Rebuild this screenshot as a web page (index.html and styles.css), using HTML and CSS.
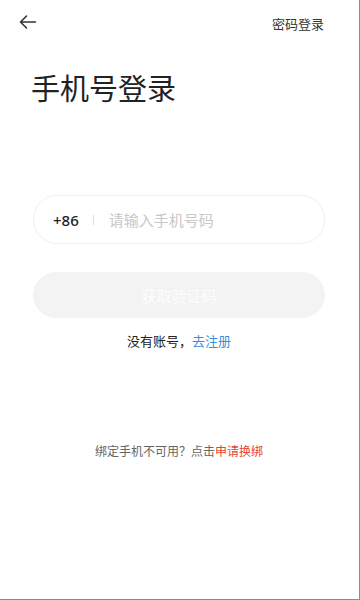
FILE: index.html
```html
<!DOCTYPE html>
<html lang="zh-CN">
<head>
<meta charset="utf-8">
<title>手机号登录</title>
<link rel="stylesheet" href="styles.css">
</head>
<body>
<div class="page">
  <header class="topbar">
    <span class="back" aria-label="返回">
      <svg width="18" height="16" viewBox="0 0 18 16"><path d="M7.5 2 L1.5 8 L7.5 14 M1.5 8 H16.5" fill="none" stroke="#333" stroke-width="1.6" stroke-linecap="round" stroke-linejoin="round"/></svg>
    </span>
    <span class="pwd-login">密码登录</span>
  </header>
  <h1 class="title">手机号登录</h1>
  <div class="phone-field">
    <span class="code">+86</span>
    <span class="sep"></span>
    <span class="placeholder">请输入手机号码</span>
  </div>
  <div class="btn">获取验证码</div>
  <p class="register">没有账号，<span class="link">去注册</span></p>
  <p class="rebind">绑定手机不可用？点击<span class="red">申请换绑</span></p>
</div>
</body>
</html>
```
FILE: styles.css
```css
* { box-sizing: border-box; }
html, body { margin: 0; padding: 0; background: #fff; }
body {
  font-family: "Noto Sans CJK SC", "Noto Sans", sans-serif;
  color: #222;
}
.page {
  width: 360px;
  height: 600px;
  border-right: 1px solid #8c8c8c;
  border-bottom: 1px solid #8c8c8c;
  padding: 0 34px 0 33px;
  overflow: hidden;
}
.topbar {
  height: 44px;
  display: flex;
  align-items: center;
  justify-content: space-between;
  margin: 0 1px 0 -14px;
}
.back { display: flex; align-items: center; height: 16px; }
.pwd-login {
  font-size: 13px;
  color: #333;
  line-height: 18px;
  margin-top: 4px;
}
.title {
  margin: 23px 0 0 -2px;
  font-size: 29px;
  font-weight: 400;
  line-height: 40px;
  color: #222;
}
.phone-field {
  margin-top: 88px;
  height: 49px;
  border: 1px solid #f0f0f0;
  border-radius: 25px;
  box-shadow: 0 0 2px rgba(0,0,0,0.03);
  display: flex;
  align-items: center;
  padding-left: 19px;
}
.code {
  font-family: "Noto Sans", "Roboto", sans-serif;
  font-size: 15px;
  font-weight: 500;
  color: #222;
  line-height: 20px;
}
.sep {
  width: 1px;
  height: 10px;
  background: #ddd;
  margin: 0 15px 0 14px;
}
.placeholder {
  font-size: 15px;
  color: #c8c8c8;
  line-height: 20px;
}
.btn {
  margin-top: 28px;
  height: 46px;
  border-radius: 23px;
  background: #f3f3f3;
  color: #fdfdfd;
  font-size: 15px;
  display: flex;
  align-items: center;
  justify-content: center;
}
.register {
  margin: 13px 0 0;
  text-align: center;
  font-size: 13px;
  line-height: 20px;
  color: #222;
}
.link { color: #3b8fe0; }
.rebind {
  margin: 90px 0 0;
  text-align: center;
  font-size: 12px;
  line-height: 20px;
  color: #666;
}
.red { color: #e8412f; }
```
